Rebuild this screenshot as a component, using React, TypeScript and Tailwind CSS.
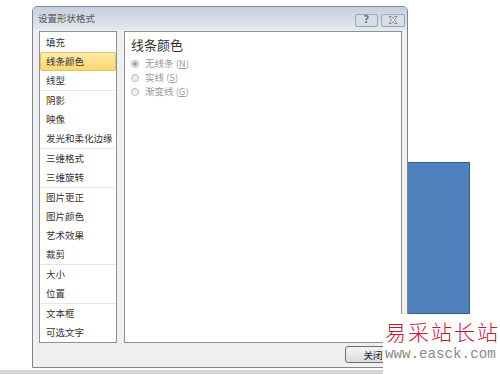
const cjk = { fontFamily: '"Noto Sans CJK SC", "Noto Sans", sans-serif' };

type Item = { label: string; selected?: boolean; sep?: boolean };

const items: Item[] = [
  { label: '填充' },
  { label: '线条颜色', selected: true },
  { label: '线型' },
  { label: '阴影', sep: true },
  { label: '映像' },
  { label: '发光和柔化边缘' },
  { label: '三维格式', sep: true },
  { label: '三维旋转' },
  { label: '图片更正', sep: true },
  { label: '图片颜色' },
  { label: '艺术效果' },
  { label: '裁剪' },
  { label: '大小', sep: true },
  { label: '位置' },
  { label: '文本框', sep: true },
  { label: '可选文字' },
];

const radios = [
  { label: '无线条', key: 'N', checked: true },
  { label: '实线', key: 'S' },
  { label: '渐变线', key: 'G' },
];

function Radio({ checked }: { checked?: boolean }) {
  return (
    <span className="flex h-[8px] w-[8px] items-center justify-center rounded-full border border-[#b9b9b9] bg-gradient-to-b from-[#e6e6e6] to-[#f7f7f7]">
      {checked && <span className="h-[4px] w-[4px] rounded-full bg-[#9a9a9a]" />}
    </span>
  );
}

export default function App() {
  return (
    <div className="relative h-[374px] w-[500px] overflow-hidden bg-white" style={cjk}>
      {/* shape on the slide */}
      <div className="absolute left-[407px] top-[162px] h-[152px] w-[63px] border border-[#385d8a] bg-[#4f81bd]" />

      {/* dialog window */}
      <div className="absolute left-[32px] top-[6px] flex h-[362px] w-[376px] flex-col rounded-t-[5px] border border-[#7f8590] bg-[#f0f0f0]">
        <div className="flex h-[23px] items-center justify-between rounded-t-[4px] bg-gradient-to-b from-[#c6d0dd] to-[#e3e9f1] pl-[5px] pr-[2px]">
          <span className="text-[9.5px] leading-none text-[#555]">设置形状格式</span>
          <div className="flex gap-[3px] pt-[4px]">
            <div className="flex h-[13px] w-[23px] items-center justify-center rounded-[2px] border border-[#9aa6b6] bg-[#d6dee9] text-[10px] font-bold leading-none text-[#6b7480]" style={{ fontFamily: '"DejaVu Sans", sans-serif' }}>
              ?
            </div>
            <div className="flex h-[13px] w-[24px] items-center justify-center rounded-[2px] border border-[#9aa6b6] bg-[#d6dee9]">
              <svg width="10" height="8" viewBox="0 0 10 8">
                <path d="M1 0.5 L3.5 0.5 L5 2.5 L6.5 0.5 L9 0.5 L6.3 4 L9 7.5 L6.5 7.5 L5 5.5 L3.5 7.5 L1 7.5 L3.7 4 Z" fill="#eef2f7" stroke="#707a86" strokeWidth="0.8" />
              </svg>
            </div>
          </div>
        </div>

        <div className="flex flex-1 gap-[7px] pl-[6px] pr-[5px] pt-[1px]">
          {/* category list */}
          <div className="flex w-[78px] flex-col border border-[#8e8f8f] bg-white pt-[1px]">
            {items.map((it) => (
              <div key={it.label} className="flex flex-col">
                {it.sep && <div className="mx-[1px] h-[1px] bg-[#e6e6e6]" />}
                <div
                  className={
                    it.selected
                      ? 'flex h-[19px] items-center rounded-[2px] border border-[#e2c06a] bg-gradient-to-b from-[#fdeba9] to-[#fbd86a] pl-[5px] text-[9.5px] text-[#333]'
                      : 'flex h-[19px] items-center pl-[6px] text-[9.5px] text-[#333]'
                  }
                >
                  {it.label}
                </div>
              </div>
            ))}
          </div>

          {/* settings panel */}
          <div className="flex flex-1 flex-col border border-[#8e8f8f] bg-white pl-[6px] pt-[5px]">
            <div className="text-[13px] leading-[16px] text-[#333]">线条颜色</div>
            <div className="mt-[4px] flex flex-col">
              {radios.map((r) => (
                <div key={r.key} className="flex h-[14px] items-center gap-[6px] text-[9.5px] text-[#9a9a9a]">
                  <Radio checked={r.checked} />
                  <span>
                    {r.label} (<span className="underline">{r.key}</span>)
                  </span>
                </div>
              ))}
            </div>
          </div>
        </div>

        <div className="flex h-[25px] items-center justify-end pr-[6px]">
          <div className="flex h-[17px] w-[56px] items-center justify-center rounded-[3px] border border-[#707070] bg-gradient-to-b from-[#f4f4f4] to-[#dcdcdc] text-[9.5px] text-[#222]">
            关闭
          </div>
        </div>
      </div>

      {/* bottom strip */}
      <div className="absolute bottom-0 left-0 h-[4px] w-[500px] bg-[#d6d6d6]" />

      {/* watermark */}
      <div className="absolute left-[383px] top-[314px] flex h-[60px] w-[117px] flex-col items-start bg-white pl-[2px] pt-[4px]">
        <div className="text-[21px] font-light leading-[26px] tracking-[2px] text-[#cc1236]">易采站长站</div>
        <div className="mt-[2px] text-[14.2px] leading-[16px] text-[#8a8a8a]" style={{ fontFamily: '"Liberation Mono", monospace' }}>www.easck.com</div>
      </div>
    </div>
  );
}
